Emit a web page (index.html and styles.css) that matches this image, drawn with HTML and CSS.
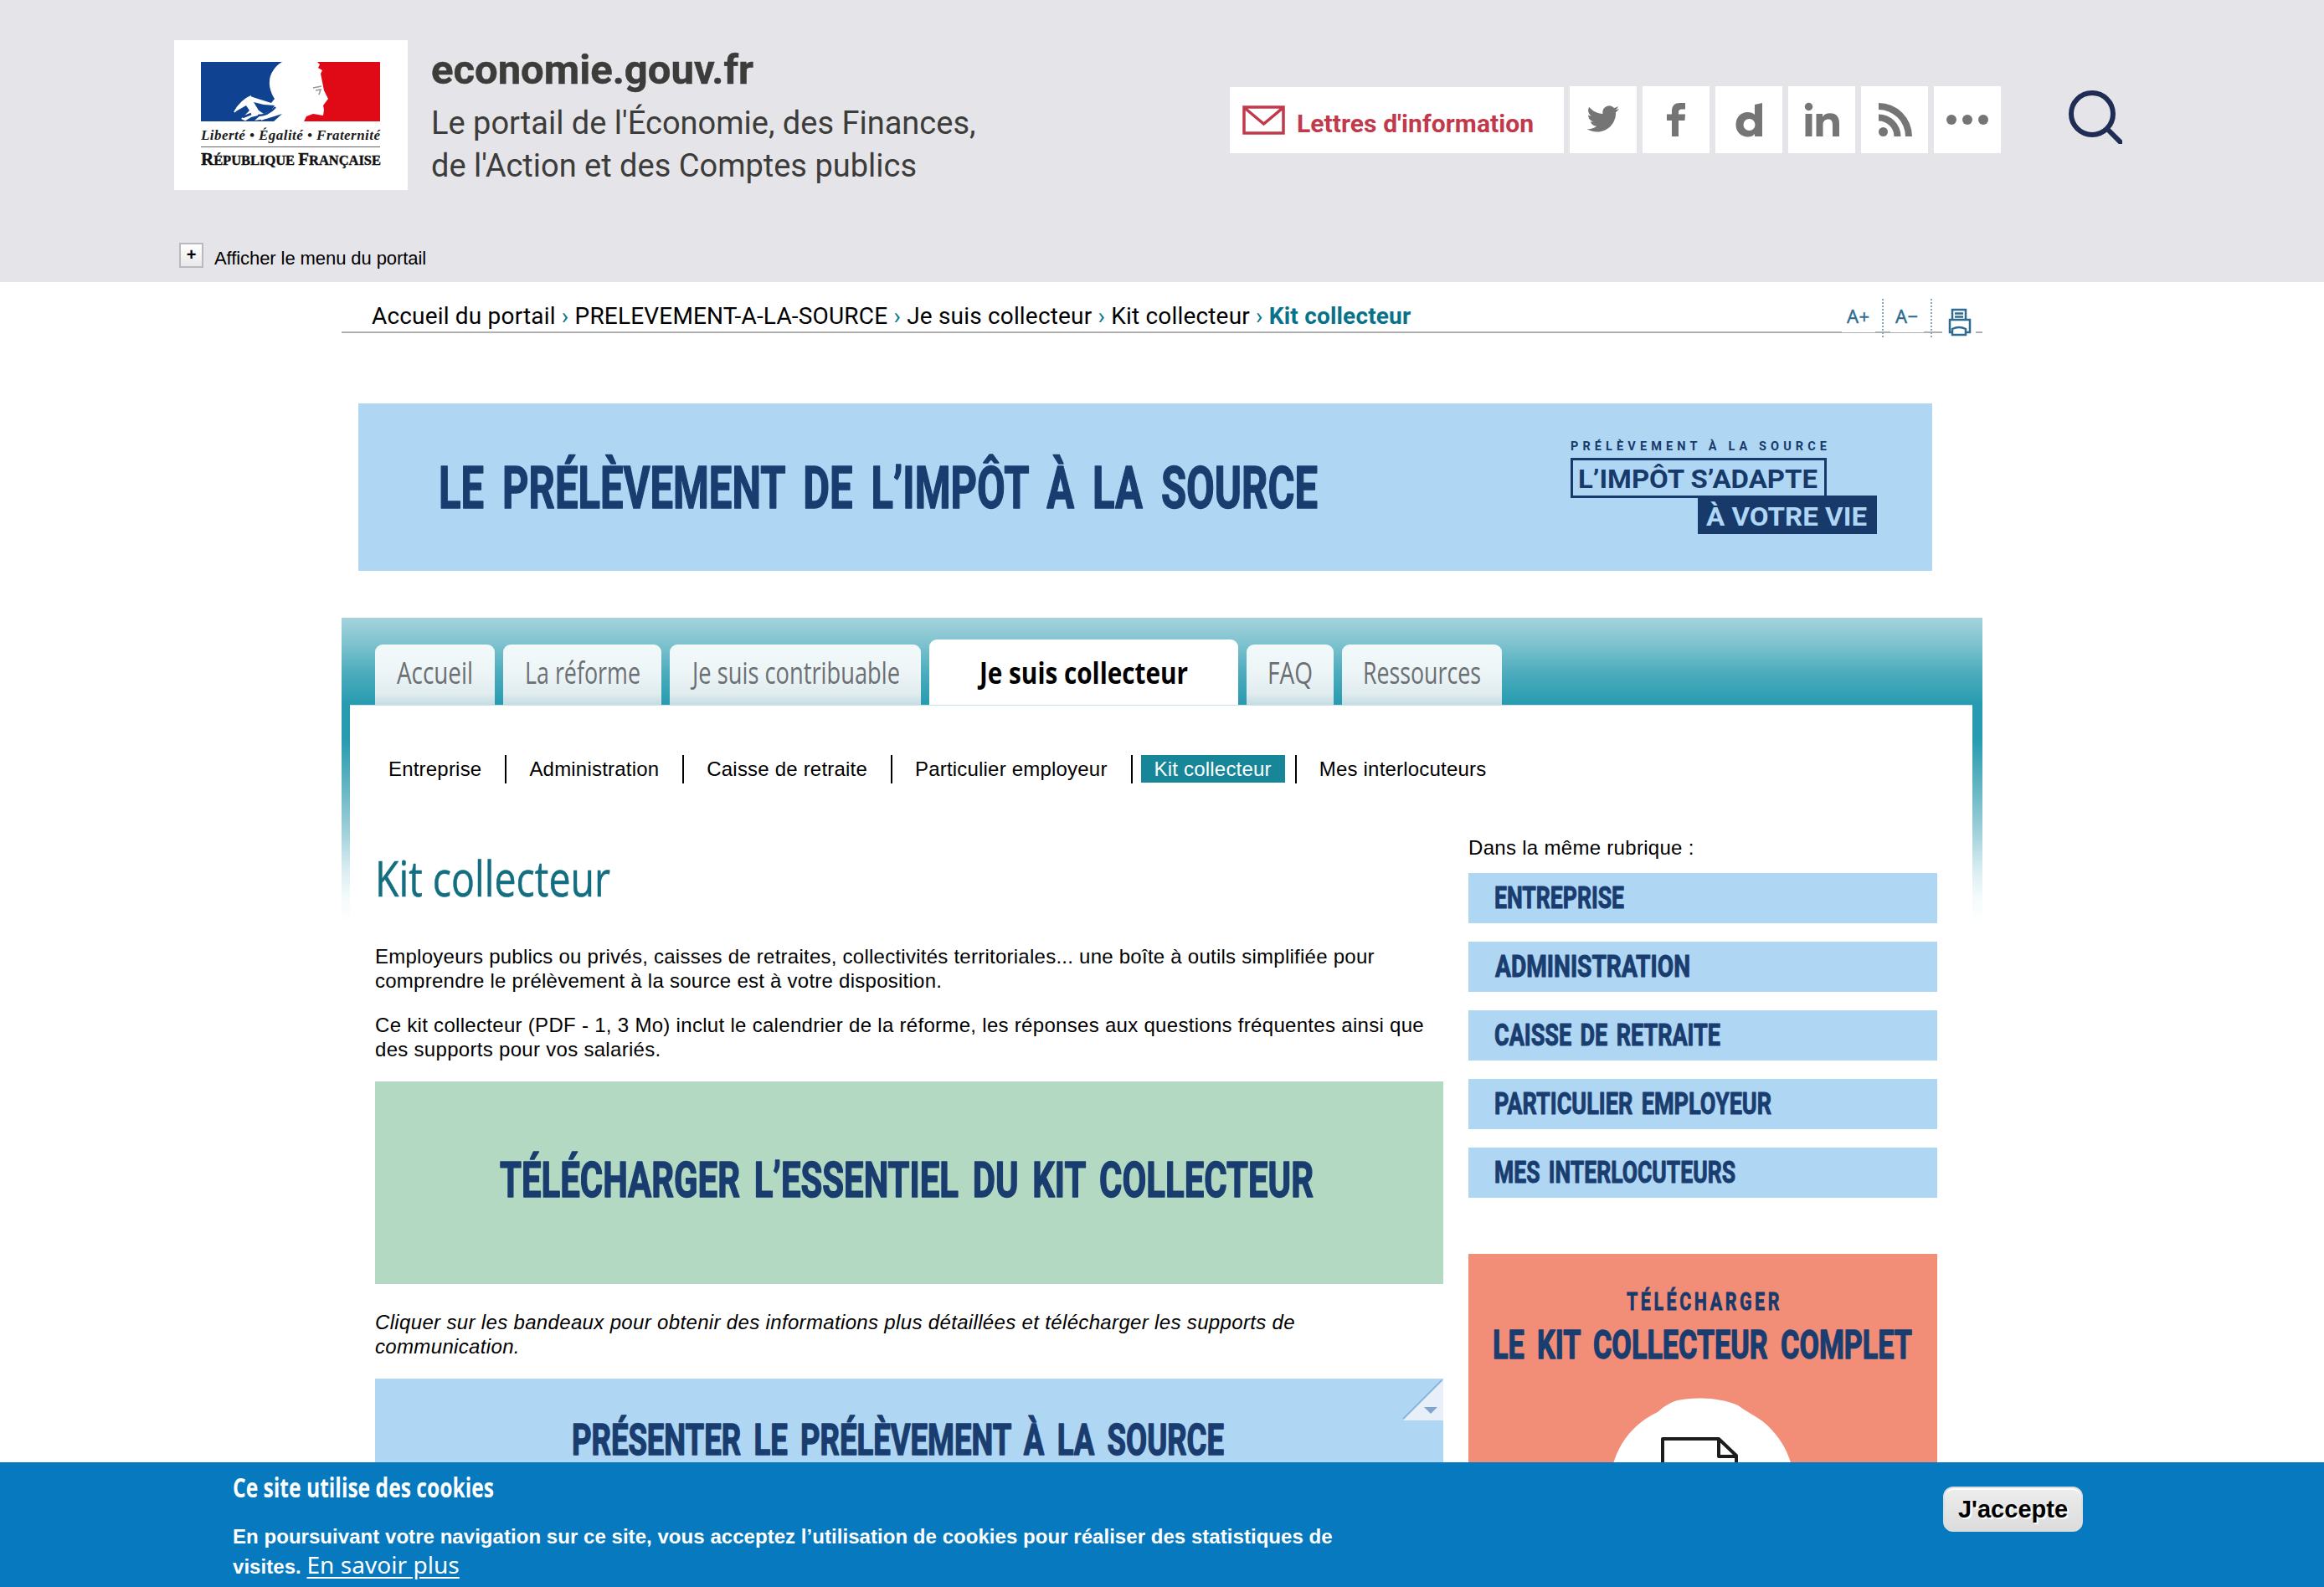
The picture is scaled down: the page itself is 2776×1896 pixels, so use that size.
FILE: index.html
```html
<!DOCTYPE html>
<html lang="fr">
<head>
<meta charset="utf-8">
<title>Kit collecteur | economie.gouv.fr</title>
<link rel="stylesheet" href="styles.css">
</head>
<body>
<header class="portal">
  <div class="portal-row">
    <svg class="marianne" viewBox="0 0 279 179" role="img" aria-label="République française">
      <rect width="279" height="179" fill="#fff"/>
      <path fill="#0f4391" d="M32 26H129C120 31 114 41 114 49C113 56 117 66 120 70L116 75L100 70L91 67L79 76L72 86L86 78L90 84L80 94L86 97H32Z"/>
      <path fill="#0f4391" d="M95 74L107 77L120 78L116 84L107 88L101 84Z"/>
      <path fill="#0f4391" d="M96 96L110 94L129 88L119 97H84L92 92L104 89Z"/>
      <path fill="none" stroke="#fff" stroke-width="2" d="M72 86Q80 72 92 67M104 95L128 83"/>
      <path fill="none" stroke="#0f4391" stroke-width="2.500" d="M82 92L92 88M100 90Q112 90 121 80"/>
      <path fill="#e00a17" d="M171 26H246V97H155L158 91L166 88L178 90L179 83L178 78L184 70L179 60L175 40L177 36L172 33L174 29Z"/>
      <path fill="none" stroke="#999" stroke-width="1.6" d="M166 57L176 55M169 60L175 59L173 65"/>
      <text class="motto" x="32" y="119" textLength="214">Liberté • Égalité • Fraternité</text>
      <path stroke="#666" stroke-width="1" d="M32 127.500H246"/>
      <text class="republic" x="32" y="149" textLength="215" lengthAdjust="spacingAndGlyphs"><tspan font-size="21">R</tspan>ÉPUBLIQUE <tspan font-size="21">F</tspan>RANÇAISE</text>
    </svg>
    <div class="brand">
      <div class="brand-name">economie.gouv.fr</div>
      <div class="brand-desc">Le portail de l'Économie, des Finances,<br>de l'Action et des Comptes publics</div>
    </div>
    <nav class="social">
      <a class="newsletter">
        <svg width="51" height="35" viewBox="0 0 51 35"><path d="M2 2H49V33H2ZM4 4L25.500 22L47 4" fill="none" stroke="#c03a4c" stroke-width="3.500"/></svg>
        <span>Lettres d'information</span>
      </a>
      <a class="tile"><svg viewBox="0 0 80 80"><path d="M59 27c-1.400.7-2.900 1.100-4.500 1.300 1.600-1 2.900-2.600 3.500-4.400-1.500.9-3.200 1.600-5 2a7.900 7.900 0 0 0-13.700 5.400c0 .6.100 1.200.2 1.800-6.600-.3-12.400-3.500-16.300-8.300-2.100 3.700-1 8.300 2.500 10.600-1.300 0-2.500-.4-3.600-1 0 3.800 2.600 7 6.300 7.800-1.200.3-2.400.4-3.600.1 1 3.200 4 5.400 7.400 5.500-3.300 2.600-7.500 3.700-11.700 3.300 3.600 2.300 7.800 3.500 12.100 3.500 14.600 0 23-12.300 22.400-23.300 1.600-1.100 2.900-2.600 4-4.300z"/></svg></a>
      <a class="tile"><svg viewBox="0 0 80 80"><path d="M35 60V41H29V33.500H35V29.500C35 23 39 20 44.500 20H51V27.500H47C44 27.500 43 29 43 31V33.500H51L50.500 41H43V60Z"/></svg></a>
      <a class="tile"><svg viewBox="0 0 80 80"><path fill-rule="evenodd" d="M47 22L56 20V60H47V57C45 59.500 42.500 60.500 39 60.500C30 60.500 24.500 54 24.500 46C24.500 37.500 30 31 38.500 31C42 31 45 32 47 34ZM40.500 39A6.800 6.800 0 1 0 40.500 53A6.800 6.800 0 1 0 40.500 39Z"/></svg></a>
      <a class="tile"><svg viewBox="0 0 80 80"><circle cx="24.500" cy="24.500" r="4.700"/><path d="M20.500 33H28.500V60H20.500ZM33.500 33H41V36.500C43 33.500 46 32.300 50 32.300C57.500 32.300 61 37 61 44V60H53V46C53 42 51.500 39.500 48 39.500C44 39.500 41.500 42 41.500 46V60H33.500Z"/></svg></a>
      <a class="tile"><svg viewBox="0 0 80 80"><circle cx="26.500" cy="54.500" r="5.500"/><path d="M21 33.500A26.500 26.500 0 0 1 47.500 60H39.500A18.500 18.500 0 0 0 21 41.500ZM21 20A40 40 0 0 1 61 60H53A32 32 0 0 0 21 28Z"/></svg></a>
      <a class="tile"><svg viewBox="0 0 80 80"><circle cx="21" cy="40" r="6"/><circle cx="40" cy="40" r="6"/><circle cx="59" cy="40" r="6"/></svg></a>
    </nav>
    <svg class="search" viewBox="0 0 64 64" fill="none" stroke="#1f2d54" stroke-width="6"><circle cx="28" cy="28" r="25"/><path d="M46 46L64 64"/></svg>
  </div>
  <div class="portal-toggle"><span class="plus">+</span>Afficher le menu du portail</div>
</header>

<div class="site">
  <div class="crumbs">
    <div class="trail">Accueil du portail <i>›</i> PRELEVEMENT-A-LA-SOURCE <i>›</i> Je suis collecteur <i>›</i> Kit collecteur <i>›</i> <b>Kit collecteur</b></div>
    <div class="tools">
      <span class="tool">A+</span><span class="tool">A−</span>
      <svg class="printer" width="40" height="46" viewBox="0 0 40 46"><rect width="40" height="46" fill="#fff"/><g fill="none" stroke="#2f6b90" stroke-width="2.500"><path d="M12 24V13H28V24M15 17.500H25M15 21.500H25M12 40H9V25H33V40H29"/><path d="M12 36V43H28V36Q20 32 12 36Z"/></g></svg>
    </div>
  </div>

  <svg class="banner" viewBox="0 0 1880 200">
    <text class="hand" x="96" y="125" font-size="70" textLength="1050" lengthAdjust="spacingAndGlyphs">LE PRÉLÈVEMENT DE L’IMPÔT À LA SOURCE</text>
    <text class="sign" x="1448" y="56" font-size="14.500" textLength="306">PRÉLÈVEMENT À LA SOURCE</text>
    <rect x="1449.500" y="66.500" width="303" height="45" fill="none" stroke="#173a6b" stroke-width="3"/>
    <text class="sign" x="1457" y="101" font-size="32" textLength="286" lengthAdjust="spacingAndGlyphs">L’IMPÔT S’ADAPTE</text>
    <rect x="1600" y="110" width="214" height="46" fill="#173a6b"/>
    <text class="sign light" x="1610" y="146" font-size="31" textLength="192" lengthAdjust="spacingAndGlyphs">À VOTRE VIE</text>
  </svg>

  <div class="frame">
    <nav class="tabs">
      <a class="tab t1"><svg height="72"><text x="26" y="47" textLength="91" lengthAdjust="spacingAndGlyphs">Accueil</text></svg></a>
      <a class="tab t2"><svg height="72"><text x="26" y="47" textLength="138" lengthAdjust="spacingAndGlyphs">La réforme</text></svg></a>
      <a class="tab t3"><svg height="72"><text x="27" y="47" textLength="248" lengthAdjust="spacingAndGlyphs">Je suis contribuable</text></svg></a>
      <a class="tab t4 active"><svg height="78"><text x="60" y="53" textLength="249" lengthAdjust="spacingAndGlyphs">Je suis collecteur</text></svg></a>
      <a class="tab t5"><svg height="72"><text x="25" y="47" textLength="54" lengthAdjust="spacingAndGlyphs">FAQ</text></svg></a>
      <a class="tab t6"><svg height="72"><text x="25" y="47" textLength="141" lengthAdjust="spacingAndGlyphs">Ressources</text></svg></a>
    </nav>
    <div class="panel">
      <nav class="submenu">
        <a>Entreprise</a><a>Administration</a><a>Caisse de retraite</a><a>Particulier employeur</a><a class="current"><span>Kit collecteur</span></a><a>Mes interlocuteurs</a>
      </nav>
      <div class="columns">
        <main class="article">
          <h1><svg width="400" height="80"><text x="0" y="51" textLength="281" lengthAdjust="spacingAndGlyphs">Kit collecteur</text></svg></h1>
          <p>Employeurs publics ou privés, caisses de retraites, collectivités territoriales... une boîte à outils simplifiée pour<br>comprendre le prélèvement à la source est à votre disposition.</p>
          <p class="wide">Ce kit collecteur (PDF - 1, 3 Mo) inclut le calendrier de la réforme, les réponses aux questions fréquentes ainsi que<br>des supports pour vos salariés.</p>
          <svg class="strip green" viewBox="0 0 1276 242"><text class="hand" x="149" y="138" font-size="60" textLength="972" lengthAdjust="spacingAndGlyphs">TÉLÉCHARGER L’ESSENTIEL DU KIT COLLECTEUR</text></svg>
          <p class="note">Cliquer sur les bandeaux pour obtenir des informations plus détaillées et télécharger les supports de<br>communication.</p>
          <svg class="strip blue" viewBox="0 0 1276 242"><text class="hand" x="235" y="91" font-size="52" textLength="779" lengthAdjust="spacingAndGlyphs">PRÉSENTER LE PRÉLÈVEMENT À LA SOURCE</text><path fill="#e9eff8" d="M1276 2V50H1228Z"/><path stroke="#86a9d2" stroke-width="1.500" d="M1274 2L1228 48"/><path fill="#7ea4d0" d="M1253 34H1269L1261 42Z"/></svg>
        </main>
        <aside class="side">
          <div class="side-title">Dans la même rubrique :</div>
          <svg class="link" viewBox="0 0 560 60"><text class="hand" x="31" y="42" font-size="36" textLength="155" lengthAdjust="spacingAndGlyphs">ENTREPRISE</text></svg>
          <svg class="link" viewBox="0 0 560 60"><text class="hand" x="32" y="42" font-size="36" textLength="233" lengthAdjust="spacingAndGlyphs">ADMINISTRATION</text></svg>
          <svg class="link" viewBox="0 0 560 60"><text class="hand" x="31" y="42" font-size="36" textLength="270" lengthAdjust="spacingAndGlyphs">CAISSE DE RETRAITE</text></svg>
          <svg class="link" viewBox="0 0 560 60"><text class="hand" x="31" y="42" font-size="36" textLength="331" lengthAdjust="spacingAndGlyphs">PARTICULIER EMPLOYEUR</text></svg>
          <svg class="link" viewBox="0 0 560 60"><text class="hand" x="31" y="42" font-size="36" textLength="288" lengthAdjust="spacingAndGlyphs">MES INTERLOCUTEURS</text></svg>
          <svg class="kit" viewBox="0 0 560 420">
            <text class="sign tele" x="189" y="67" font-size="30" textLength="186" lengthAdjust="spacingAndGlyphs">TÉLÉCHARGER</text>
            <text class="hand" x="29" y="125" font-size="49" textLength="501" lengthAdjust="spacingAndGlyphs">LE KIT COLLECTEUR COMPLET</text>
            <path fill="#fff" d="M170 290C165 250 185 208 226 189C236 180 243 177 250 175C268 171 300 171 322 181C332 189 345 194 355 203C390 235 395 275 382 310C365 360 330 382 280 382C215 380 175 340 170 290Z"/>
            <path fill="none" stroke="#1d1d1b" stroke-width="4" stroke-linejoin="round" d="M232 330V221H299L320 241V330ZM299 221V242H320"/>
          </svg>
        </aside>
      </div>
    </div>
  </div>
</div>

<div class="cookies">
  <div class="cookie-text">
    <svg width="400" height="46"><text class="cookie-title" x="0" y="42" textLength="312" lengthAdjust="spacingAndGlyphs">Ce site utilise des cookies</text></svg>
    <p>En poursuivant votre navigation sur ce site, vous acceptez l’utilisation de cookies pour réaliser des statistiques de<br>visites. <a>En savoir plus</a></p>
  </div>
  <button class="accept">J'accepte</button>
</div>
</body>
</html>
```

FILE: styles.css
```css
* { box-sizing: border-box; }
html, body { margin: 0; height: 1896px; overflow: hidden; }
body { background: #fff; color: #000; font-family: "Liberation Sans", Arial, sans-serif; font-size: 24px; }
svg { display: block; flex: none; }
h1, p { margin: 0; }

.portal { background: #e5e4e9; height: 337px; padding: 48px 241px 0 208px; }
.portal-row { display: flex; height: 179px; }
.marianne { width: 279px; height: 179px; }
.motto { font: italic bold 17px "Liberation Serif", serif; fill: #1c1c1c; }
.republic { font: bold 16.500px "Liberation Serif", serif; fill: #111; stroke: #111; stroke-width: .4px; }
.brand { margin-left: 28px; padding-top: 8px; color: #3c3c3a; font-family: Roboto, sans-serif; white-space: nowrap; }
.brand-name { font-size: 49px; font-weight: 700; line-height: 56px; -webkit-text-stroke: .5px #3c3c3a; }
.brand-desc { margin-top: 10px; font-size: 38px; line-height: 51px; }
.social { display: flex; gap: 7px; margin: 55px 0 0 auto; height: 80px; align-items: flex-end; }
.newsletter { display: flex; align-items: flex-start; width: 399px; height: 79px; padding: 22px 0 0 15px; gap: 14px; background: #fff; color: #c03a4c; font: 700 30px/44px Roboto, sans-serif; letter-spacing: .08px; white-space: nowrap; }
.tile { width: 80px; height: 80px; background: #fff; }
.tile svg { width: 80px; height: 80px; fill: #757575; }
.search { width: 64px; height: 64px; margin: 60px 0 0 81px; }
.portal-toggle { display: flex; align-items: flex-start; gap: 13px; margin: 62px 0 0 6px; font-size: 22px; line-height: 40px; letter-spacing: -.08px; }
.plus { width: 29px; height: 30px; margin-top: 1px; border: 2px solid #b9b9bf; background: linear-gradient(#fff, #e9e9ec); font: bold 20px/25px "Liberation Sans", sans-serif; text-align: center; }

.site { width: 1960px; margin-left: 408px; }
.crumbs { display: flex; justify-content: space-between; height: 61px; background: linear-gradient(#b0b0b0, #b0b0b0) 0 59px / 100% 2px no-repeat; padding: 20px 8px 0 36px; font: 28px/42px Roboto, sans-serif; white-space: nowrap; }
.trail { letter-spacing: .18px; }
.trail i { font-style: normal; color: #08788f; }
.trail b { color: #08728b; }
.tools { display: flex; height: 46px; }
.tool { width: 50px; height: 46px; padding-left: 6px; background: linear-gradient(#fff, #fff) 0 0 / 40px 40px no-repeat; border-right: 2px dotted #7fa9c4; color: #2f6b90; font: 22px/40px "Noto Sans", sans-serif; letter-spacing: .5px; -webkit-text-stroke: .4px #2f6b90; }
.tool + .tool { margin-left: 8px; }
.printer { margin-left: 12px; }

.banner { width: 1880px; height: 200px; margin: 84px 0 0 20px; background: #afd6f3; }
.hand { font-family: Roboto, sans-serif; font-weight: 700; fill: #1a3d70; word-spacing: 14px; stroke: #1a3d70; stroke-width: 1.500px; stroke-linejoin: round; }
.sign { font-family: Roboto, sans-serif; font-weight: 700; fill: #173a6b; }
.light { fill: #afd6f3; }
.tele { letter-spacing: 5px; stroke: #173a6b; stroke-width: .8px; }

.frame { margin-top: 56px; padding: 0 12px 0 10px; background: linear-gradient(#a5d4dd 0, #7fc3cf 30px, #4dacbd 65px, #279bb0 104px, #279bb0 145px, #5cb2c0 195px, #9fd0d9 255px, #d8edf1 300px, #f5fbfc 335px, #fff 365px); }
.tabs { display: flex; align-items: flex-end; gap: 10px; height: 104px; padding-left: 30px; }
.tab { height: 72px; border-radius: 9px 9px 0 0; background: linear-gradient(#f1f9fb, #edf5f7 45%, #e0ecee 82%, #c5dce3); }
.tab svg { width: 100%; overflow: visible; }
.tab text { font: 36px "Open Sans", sans-serif; fill: #6c6f73; }
.tab.active { height: 78px; background: #fff; }
.tab.active text { font-weight: 700; fill: #000; }
.t1 { width: 143px; }
.t2 { width: 189px; }
.t3 { width: 300px; }
.t4 { width: 369px; }
.t5 { width: 104px; }
.t6 { width: 191px; }

.panel { height: 1100px; background: #fff; border-top: 1px solid #c4e2e8; padding: 59px 0 0 30px; }
.submenu { display: flex; height: 34px; padding-left: 16px; line-height: 33px; letter-spacing: .2px; white-space: nowrap; }
.submenu a { padding: 0 28px 0 27px; border-right: 2px solid #000; }
.submenu a:first-child { padding-left: 0; }
.submenu a:last-child { border: 0; }
.submenu .current { padding: 0 12px 0 10px; }
.current span { display: block; height: 33px; padding: 0 16px; background: #178698; color: #fff; }

.columns { display: flex; gap: 30px; padding-top: 64px; }
.article { width: 1276px; padding-top: 20px; }
.article h1 { height: 108px; }
.article h1 text { font: 58px "Open Sans", sans-serif; fill: #126e80; stroke: #126e80; stroke-width: .5px; }
.article p { line-height: 29px; margin-bottom: 24px; letter-spacing: .25px; white-space: nowrap; }
.article .wide { letter-spacing: .3px; }
.strip { width: 1276px; height: 242px; }
.strip .hand { word-spacing: 9px; }
.green { background: #b3d9c3; }
.blue { background: #afd6f3; }
.article .note { margin: 31px 0 24px; font-style: italic; letter-spacing: .34px; }
.side { width: 560px; }
.side-title { height: 43px; line-height: 26px; letter-spacing: .3px; }
.link { width: 560px; height: 60px; margin-bottom: 22px; background: #afd6f3; }
.link .hand { word-spacing: 5px; stroke-width: 1px; }
.kit { width: 560px; height: 420px; margin-top: 67px; background: #f28e78; }
.kit .hand { word-spacing: 10px; }

.cookies { position: fixed; left: 0; right: 0; bottom: 0; height: 149px; padding: 0 288px 0 278px; background: #0779bf; color: #fff; display: flex; justify-content: space-between; }
.cookie-title { font: 700 32px "Open Sans", sans-serif; fill: #fff; }
.cookie-text p { margin-top: 25px; font-size: 24px; font-weight: 700; line-height: 36px; letter-spacing: .045px; white-space: nowrap; }
.cookie-text a { font: 28px/30px "Noto Sans", sans-serif; text-decoration: underline; text-underline-offset: 4px; }
.accept { width: 167px; height: 54px; margin-top: 29px; padding: 0; border: 2px solid #ddd; border-radius: 12px; background: linear-gradient(#ededed, #dcdcdc); box-shadow: inset 0 2px 0 #fff; color: #000; font: bold 29px "Liberation Sans", sans-serif; text-shadow: 2px 2px 0 #fff; }
```
